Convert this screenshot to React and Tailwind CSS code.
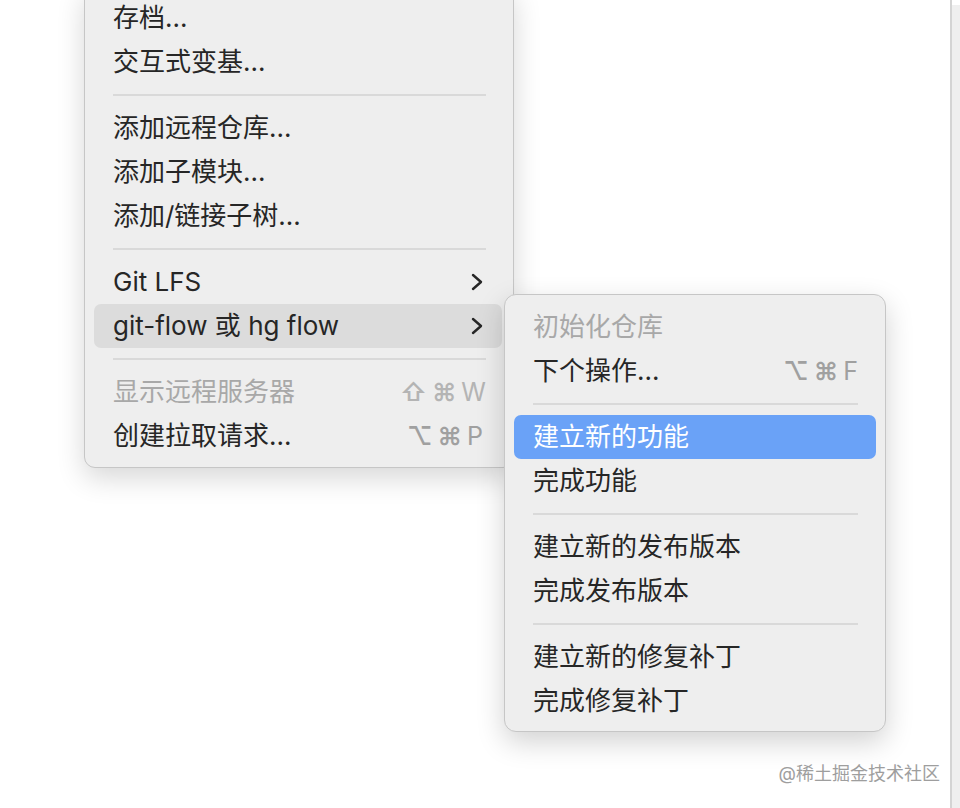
import React from "react";

const font = { fontFamily: 'Inter, "Noto Sans CJK SC", "DejaVu Sans", sans-serif' };

function Chevron() {
  return (
    <svg width="12" height="18" viewBox="0 0 12 18" className="shrink-0">
      <polyline points="2,2 10,9 2,16" fill="none" stroke="#262626" strokeWidth="2.4" strokeLinecap="round" strokeLinejoin="round" />
    </svg>
  );
}

function Shortcut({ keys, disabled }) {
  return (
    <div className={"flex items-center gap-[5px] text-[25px] " + (disabled ? "text-[#b4b4b4]" : "text-[#a0a0a0]")}>
      {keys.map((k, i) => (
        <span key={i} className={"leading-none " + (i < keys.length - 1 ? "font-semibold" : "")}>{k}</span>
      ))}
    </div>
  );
}

function Item({ label, disabled, highlight, active, shortcut, submenu, pr = "pr-[16px]" }) {
  let cls = "h-[44px] flex items-center justify-between pl-[19px] rounded-[7px] text-[26px] ";
  cls += pr + " ";
  if (active) cls += "bg-[#6aa2f7] text-white ";
  else if (highlight) cls += "bg-[#dcdcdc] text-[#262626] ";
  else if (disabled) cls += "text-[#a8a8a8] ";
  else cls += "text-[#262626] ";
  return (
    <div className={cls}>
      <span className="leading-none whitespace-nowrap">{label}</span>
      {shortcut && <Shortcut keys={shortcut} disabled={disabled} />}
      {submenu && <Chevron />}
    </div>
  );
}

function Sep({ ml = "ml-[19px]", mr = "mr-[16px]" }) {
  return (
    <div className="h-[22px] flex items-center">
      <div className={"h-[2px] flex-1 bg-[#d9d9d9] " + ml + " " + mr}></div>
    </div>
  );
}

export default function App() {
  return (
    <div className="w-[960px] h-[808px] bg-white overflow-hidden flex" style={font}>
      <div className="relative flex-1">
        <div className="ml-[84px] mt-[-15px] w-[430px] border border-[#c6c6c6] bg-[#eeeeee] rounded-[11px] pl-[9px] pr-[11px] pt-[10px] pb-[9px] shadow-[0_10px_28px_rgba(0,0,0,0.16)]">
          <Item label="存档..." />
          <Item label="交互式变基..." />
          <Sep />
          <Item label="添加远程仓库..." />
          <Item label="添加子模块..." />
          <Item label="添加/链接子树..." />
          <Sep />
          <Item label="Git LFS" submenu pr="pr-[19px]" />
          <Item label="git-flow 或 hg flow" submenu highlight pr="pr-[19px]" />
          <Sep />
          <Item label="显示远程服务器" disabled shortcut={["⇧", "⌘", "W"]} />
          <Item label="创建拉取请求..." shortcut={["⌥", "⌘", "P"]} pr="pr-[19px]" />
        </div>

        <div className="absolute left-[504px] top-[294px] w-[382px] border border-[#c6c6c6] bg-[#eeeeee] rounded-[12px] px-[9px] pt-[10px] pb-[8px] shadow-[0_10px_28px_rgba(0,0,0,0.18)]">
          <Item label="初始化仓库" disabled />
          <Item label="下个操作..." shortcut={["⌥", "⌘", "F"]} pr="pr-[18px]" />
          <Sep mr="mr-[18px]" />
          <Item label="建立新的功能" active />
          <Item label="完成功能" />
          <Sep mr="mr-[18px]" />
          <Item label="建立新的发布版本" />
          <Item label="完成发布版本" />
          <Sep mr="mr-[18px]" />
          <Item label="建立新的修复补丁" />
          <Item label="完成修复补丁" />
        </div>

        <div className="absolute right-[10px] top-[765px] text-[18px] text-[#9e9e9e] leading-none">@稀土掘金技术社区</div>
      </div>
      <div className="w-[2px] bg-[#d4d4d4]"></div>
      <div className="w-[8px] mt-[5px] bg-[#efefef]"></div>
    </div>
  );
}
